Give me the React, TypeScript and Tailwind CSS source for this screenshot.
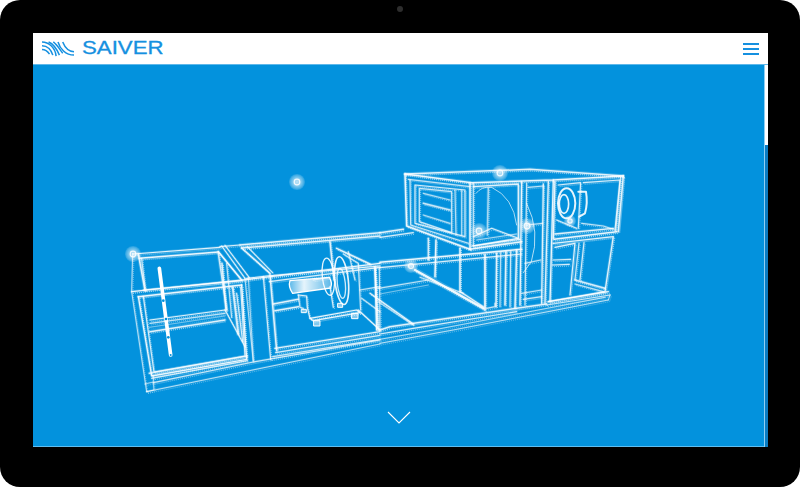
const groupA: [string, number, number][] = [
  ["70,72 330,52", 3, 0.85], ["88,85 325,66", 4, 0.9], ["330,50 390,45", 3, 0.8], ["390,45 810,8", 4, 0.85], ["395,54 810,18", 4, 0.85],
  ["68,70 65,185 110,485", 2.5, 0.7], ["85,72 105,182", 4, 0.85], ["95,85 106,180", 3, 0.7],
  ["65,185 400,150 810,100", 3.5, 0.9], ["85,200 395,165", 4, 0.9], ["100,180 395,152", 3, 0.8], ["410,145 470,138 810,108", 3, 0.85],
  ["85,200 125,438 410,388 395,165", 3.5, 0.9], ["100,200 132,426 405,378 392,172", 3, 0.8], ["118,430 412,378", 4, 0.75],
  ["110,485 810,342", 2.5, 0.7], ["130,458 430,396 810,330", 3, 0.75], ["125,445 412,392", 3, 0.75], ["105,462 130,456 130,438", 2.5, 0.6], ["110,485 132,480 130,458", 2.5, 0.6],
  ["325,65 395,150", 4, 0.9], ["335,48 405,145", 3, 0.75], ["345,46 418,143", 3, 0.75],
  ["325,70 350,240", 4, 0.75], ["336,100 348,240", 4, 0.8], ["350,100 365,262", 3, 0.7], ["368,172 385,312", 5, 0.8], ["380,190 398,335", 3, 0.8], ["345,240 405,350", 3, 0.8],
  ["120,270 345,240", 3, 0.85], ["120,280 345,250", 3, 0.7], ["120,305 345,270", 4, 0.85], ["118,292 345,258", 2, 0.5],
  ["405,145 430,396", 2.5, 0.7], ["415,143 430,392", 2.5, 0.6], ["460,140 482,388", 3, 0.8], ["480,135 500,362", 4, 0.85],
  ["395,54 480,130", 4, 0.85], ["412,50 488,128", 3, 0.75],
  ["478,155 810,112", 3, 0.8], ["495,355 810,305", 3.5, 0.85], ["497,368 810,316", 3, 0.8], ["488,380 810,328", 3, 0.75],
  ["660,35 672,150", 4, 0.85], ["680,55 780,102", 4, 0.85], ["700,72 745,100 752,240", 3, 0.75], ["715,65 735,150", 3, 0.7],
  ["750,180 810,170", 3, 0.7], ["755,205 810,245", 3, 0.7], ["745,240 810,300", 3, 0.85], ["795,110 805,300", 4, 0.8],
  ["490,222 565,208", 4, 0.85], ["495,242 565,230", 4, 0.85],
  ["565,195 590,198 592,232 600,265", 3, 0.85], ["600,265 740,240 750,248 610,272 600,265", 3, 0.9], ["565,195 570,232 580,235", 3, 0.7], ["660,170 670,232", 3, 0.8],
  ["610,150 660,142", 3, 0.7],
];
const groupB: [string, number, number][] = [
  ["105,42 480,28 760,48", 4, 0.85], ["105,42 305,68 550,60 760,48", 4, 0.9], ["115,58 300,80", 3, 0.7],
  ["105,42 110,198 300,268", 4, 0.9], ["120,60 122,195 295,250", 3, 0.75], ["300,68 300,268", 4, 0.9], ["310,70 310,258", 3, 0.75],
  ["310,80 445,72 445,235 310,258", 3.5, 0.85], ["300,268 455,245", 4, 0.9], ["305,258 450,238", 3, 0.75],
  ["135,75 285,90 285,230 135,190 135,75", 3, 0.8], ["148,85 245,95 245,218 148,185 148,85", 3, 0.75],
  ["160,100 240,120", 3, 0.65], ["160,130 240,150", 4, 0.75], ["160,165 240,190", 3, 0.65], ["255,90 258,225", 3, 0.65], ["275,92 275,225", 3, 0.65],
  ["355,85 352,225", 4, 0.6], ["310,230 365,205 445,235", 3, 0.8], ["320,240 440,222", 3, 0.6],
  ["455,65 450,435", 3.5, 0.9], ["470,70 465,435", 3, 0.75], ["520,72 515,430", 3.5, 0.85], ["535,65 525,430", 3.5, 0.85], ["550,60 540,425", 3.5, 0.9],
  ["475,82 520,78", 3, 0.7], ["470,195 518,190", 3, 0.7], ["465,310 512,300", 3, 0.7], ["455,400 515,390", 3, 0.7], ["460,418 515,410", 3, 0.75],
  ["555,65 550,235", 3.5, 0.85], ["640,68 750,60 735,210", 3, 0.8], ["760,48 745,215", 4, 0.85], ["752,52 737,212", 3, 0.7], ["555,222 730,205", 3.5, 0.85], ["552,238 740,215", 4, 0.9],
  ["565,75 632,68 625,205", 3, 0.8], ["635,190 700,198 730,208", 3, 0.7], ["560,180 620,205", 3, 0.8],
  ["550,250 730,230 705,395 535,425", 3.5, 0.85], ["555,262 615,250 600,405", 3, 0.85], ["627,250 615,360", 3, 0.75], ["642,248 630,360", 3, 0.8],
  ["550,300 602,298", 3, 0.8], ["548,315 598,313", 3, 0.8], ["615,360 705,385", 4, 0.8], ["615,372 700,395", 3, 0.7],
  ["535,425 715,395", 3.5, 0.85], ["530,435 720,405", 3, 0.75], ["720,405 715,420", 2.5, 0.6],
  ["175,235 175,300", 4, 0.8], ["198,240 195,350", 4, 0.9], ["270,265 270,395", 4, 0.9], ["345,285 345,450", 5, 0.8], ["380,280 378,440", 4, 0.85], ["392,278 390,440", 3, 0.65], ["408,275 405,435", 4, 0.85], ["422,275 420,440", 3, 0.75], ["440,270 435,445", 4, 0.85],
  ["30,307 455,268", 4, 0.9], ["30,323 455,282", 3, 0.8], ["135,330 340,445", 6, 0.9], ["150,352 280,400", 3, 0.7], ["272,395 340,440", 3, 0.8],
  ["15,325 20,510", 4, 0.9], ["28,325 30,510", 3, 0.7], ["0,400 130,492", 3.5, 0.85], ["25,425 130,495", 3, 0.6], ["25,385 175,360", 3, 0.7], ["30,402 175,375", 2, 0.5],
  ["30,510 60,500 440,445 530,432", 4, 0.85], ["30,522 130,505 440,455", 3, 0.8], ["30,550 250,510 715,420", 2.5, 0.7], ["30,538 190,510 705,412", 2.5, 0.65],
  ["30,218 100,208", 4, 0.85], ["30,232 130,218", 3, 0.8], ["350,445 375,440 375,430", 3, 0.7],
];
const spots: [number, number, number][] = [[297, 182, 8], [133, 254, 8], [500, 173, 8], [479, 231, 8], [527, 226, 8], [411, 266, 7], [570, 221, 6]];

function Lines({ data }: { data: [string, number, number][] }) {
  return (
    <>
      {data.map(([p, w, o], i) => (
        <polyline key={`h${i}`} points={p} strokeWidth={w * 2.6} opacity={o * 0.22} />
      ))}
      {data.map(([p, w, o], i) => (
        <polyline key={`d${i}`} points={p} strokeWidth={w} opacity={o * 0.6} strokeDasharray="3 3" strokeLinecap="butt" transform="translate(4 5)" />
      ))}
      {data.map(([p, w, o], i) => (
        <polyline key={`l${i}`} points={p} strokeWidth={w * 1.15} opacity={o} />
      ))}
    </>
  );
}

function Wireframe() {
  return (
    <svg viewBox="33 65 731 381" className="absolute inset-0 h-full w-full" fill="none" stroke="#ffffff" strokeLinejoin="round" strokeLinecap="round">
      <defs>
        <radialGradient id="spot">
          <stop offset="0" stopColor="#ffffff" stopOpacity="0.75" />
          <stop offset="0.45" stopColor="#ffffff" stopOpacity="0.55" />
          <stop offset="0.8" stopColor="#ffffff" stopOpacity="0.3" />
          <stop offset="1" stopColor="#ffffff" stopOpacity="0.12" />
        </radialGradient>
        <linearGradient id="motor" x1="0" x2="1">
          <stop offset="0" stopColor="#ffffff" stopOpacity="0.35" />
          <stop offset="0.35" stopColor="#ffffff" stopOpacity="0.9" />
          <stop offset="1" stopColor="#ffffff" stopOpacity="0.35" />
        </linearGradient>
      </defs>
      <g transform="translate(110 230) scale(0.3333)">
        <Lines data={groupA} />
        <line x1="148" y1="115" x2="182" y2="375" strokeWidth="11" />
        <circle cx="160" cy="212" r="4" fill="#0392dd" stroke="none" />
        <circle cx="168" cy="267" r="4" fill="#0392dd" stroke="none" />
        <circle cx="175" cy="322" r="4" fill="#0392dd" stroke="none" />
        <circle cx="182" cy="375" r="3" fill="#0392dd" stroke="none" />
        <ellipse cx="655" cy="140" rx="18" ry="56" transform="rotate(-6 655 140)" strokeWidth="4" opacity="0.9" />
        <ellipse cx="695" cy="152" rx="20" ry="72" transform="rotate(-6 695 152)" strokeWidth="5" opacity="0.9" />
        <ellipse cx="694" cy="160" rx="12" ry="45" transform="rotate(-6 694 160)" strokeWidth="4" opacity="0.8" />
        <path d="M540,152 L658,142 Q668,158 662,174 L548,190 Q534,170 540,152 Z" fill="url(#motor)" strokeWidth="4" />
        <path d="M575,238 h14 v10 h-14 Z M612,272 h18 v16 h-18 Z M726,250 h18 v16 h-18 Z M684,220 h14 v12 h-14 Z" fill="#ffffff" fillOpacity="0.5" strokeWidth="3" />
      </g>
      <g transform="translate(370 160) scale(0.3333)">
        <Lines data={groupB} />
        <path d="M318,100 Q335,78 365,82 Q430,112 440,195" strokeWidth="3" opacity="0.65" />
        <path d="M470,130 Q512,215 484,305 L460,338" strokeWidth="3" opacity="0.7" />
        <ellipse cx="590" cy="130" rx="26" ry="45" strokeWidth="6" opacity="0.9" />
        <ellipse cx="582" cy="132" rx="14" ry="28" strokeWidth="5" opacity="0.9" />
        <path d="M625,95 H648 Q654,130 645,160 L628,170" strokeWidth="6" opacity="0.9" />
      </g>
      {spots.map(([x, y, r], i) => (
        <g key={i}>
          <circle cx={x} cy={y} r={r} fill="url(#spot)" stroke="none" />
          <circle cx={x} cy={y} r={r * 0.35} fill="none" stroke="#ffffff" strokeWidth="1.2" opacity="0.85" />
        </g>
      ))}
    </svg>
  );
}

function LogoMark() {
  return (
    <svg width="34" height="16" viewBox="0 0 36 17" fill="none" stroke="#1590e0" strokeWidth="1.6" className="shrink-0">
      <path d="M1,1 C8,1 15,7 16,16" />
      <path d="M1,5 C7,5 11,10 12.5,15" />
      <path d="M1,9 C4,9 7,11 9,14" />
      <path d="M8,1 C13,3 17,9 19.5,15" />
      <path d="M13,1 C17,4 20,9 23,13" />
      <path d="M18,1 C20,8 26,15 35,15" />
      <path d="M23,1 C25,6 29,11 35,11.5" />
    </svg>
  );
}

export default function App() {
  return (
    <div className="h-[487px] w-[800px] overflow-hidden bg-white">
      <div className="relative flex h-full w-full rounded-[20px] bg-black pb-[40px] pl-[33px] pr-[32px] pt-[33px]">
        <div className="absolute left-[397px] top-[6px] h-[6px] w-[6px] rounded-full bg-[#2e2e2e]" />
        <div className="flex min-w-0 flex-1 flex-col">
          <header className="flex h-[32px] shrink-0 items-center justify-between border-b border-[#5fb8ea] bg-white pl-[8px] pr-[9px]">
            <div className="flex items-center gap-[7px]">
              <LogoMark />
              <span className="origin-left scale-x-[1.27] font-['Liberation_Sans',sans-serif] text-[17.5px] leading-none text-[#1590e0] [-webkit-text-stroke:0.3px_#1590e0]">
                SAIVER
              </span>
            </div>
            <div className="flex w-[16px] flex-col gap-[3px]">
              <div className="h-[2px] bg-[#1590e0]" />
              <div className="h-[2px] bg-[#1590e0]" />
              <div className="h-[2px] bg-[#1590e0]" />
            </div>
          </header>
          <div className="flex min-h-0 flex-1">
            <main className="relative flex min-w-0 flex-1 flex-col items-center justify-end border-b border-[#5fbdf0] bg-[#0392dd] pb-[22px]">
              <Wireframe />
              <svg width="24" height="13" viewBox="0 0 24 13" fill="none" stroke="#ffffff" strokeWidth="1.1" className="relative">
                <polyline points="1,1 12,12 23,1" />
              </svg>
            </main>
            <div className="flex w-[4px] shrink-0 flex-col border-l border-[#8ed0f5]">
              <div className="h-[80px] bg-white" />
              <div className="flex-1 bg-[#0a7cc2]" />
            </div>
          </div>
        </div>
      </div>
    </div>
  );
}
